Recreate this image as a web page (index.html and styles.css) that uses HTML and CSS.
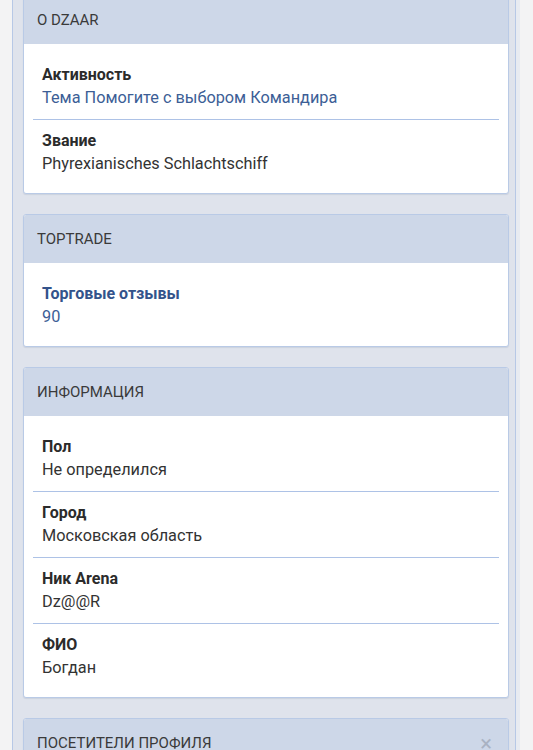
FILE: index.html
```html
<!DOCTYPE html>
<html lang="ru">
<head>
<meta charset="utf-8">
<title>Профиль</title>
<link rel="stylesheet" href="styles.css">
</head>
<body>
<div class="page">
  <div class="column">
    <section class="card">
      <h2 class="card-head">O DZAAR</h2>
      <div class="card-body">
        <div class="item">
          <div class="label">Активность</div>
          <div class="value link">Тема Помогите с выбором Командира</div>
        </div>
        <div class="item">
          <div class="label">Звание</div>
          <div class="value">Phyrexianisches Schlachtschiff</div>
        </div>
      </div>
    </section>

    <section class="card">
      <h2 class="card-head">TOPTRADE</h2>
      <div class="card-body">
        <div class="item">
          <div class="label link">Торговые отзывы</div>
          <div class="value link">90</div>
        </div>
      </div>
    </section>

    <section class="card">
      <h2 class="card-head">ИНФОРМАЦИЯ</h2>
      <div class="card-body">
        <div class="item">
          <div class="label">Пол</div>
          <div class="value">Не определился</div>
        </div>
        <div class="item">
          <div class="label">Город</div>
          <div class="value">Московская область</div>
        </div>
        <div class="item">
          <div class="label">Ник Arena</div>
          <div class="value">Dz@@R</div>
        </div>
        <div class="item">
          <div class="label">ФИО</div>
          <div class="value">Богдан</div>
        </div>
      </div>
    </section>

    <section class="card">
      <h2 class="card-head with-close">ПОСЕТИТЕЛИ ПРОФИЛЯ <span class="close">×</span></h2>
      <div class="card-body">
        <div class="item">
          <div class="label">&nbsp;</div>
          <div class="value">&nbsp;</div>
        </div>
      </div>
    </section>
  </div>
</div>
</body>
</html>
```

FILE: styles.css
```css
* { box-sizing: border-box; }

html, body {
  margin: 0;
  padding: 0;
  background: #f3f3f4;
  font-family: Roboto, "Noto Sans", "Liberation Sans", sans-serif;
  color: #2e2e2e;
  overflow: hidden;
}

.page {
  padding-left: 12px;
  margin-top: -5px;
}

.column {
  width: 504px;
  background: #dfe3ec;
  border-left: 1px solid #b7c8e6;
  border-right: 1px solid #b7c8e6;
  box-shadow: 4px 0 0 #e8ebf1;
  padding: 0 6px 0 10px;
  display: flex;
  flex-direction: column;
  gap: 20px;
}

.card {
  width: 486px;
  border: 1px solid #b9cae6;
  border-radius: 3px;
  background: #ffffff;
  box-shadow: 0 1px 1px rgba(60, 80, 120, 0.12);
  overflow: hidden;
}

.card-head {
  margin: 0;
  height: 48px;
  display: flex;
  align-items: center;
  justify-content: space-between;
  padding: 0 12px 0 13px;
  background: #cdd7e8;
  font-size: 15px;
  font-weight: 400;
  color: #3a3a3a;
}

.close {
  color: #a9b2c2;
  font-size: 22px;
  font-weight: 400;
  padding-right: 4px;
}

.card-body {
  padding: 10px 9px 8px;
}

.item {
  padding: 10px 9px 10px;
  border-bottom: 1px solid #adc2e6;
}

.item:last-child {
  border-bottom: none;
  padding-bottom: 10px;
}

.label {
  font-size: 16px;
  line-height: 22px;
  font-weight: 700;
  color: #2b2b2b;
}

.value {
  font-size: 16.3px;
  line-height: 23px;
  color: #333333;
}

.link {
  color: #3c5e96;
}

.label.link {
  color: #33538b;
}
```
